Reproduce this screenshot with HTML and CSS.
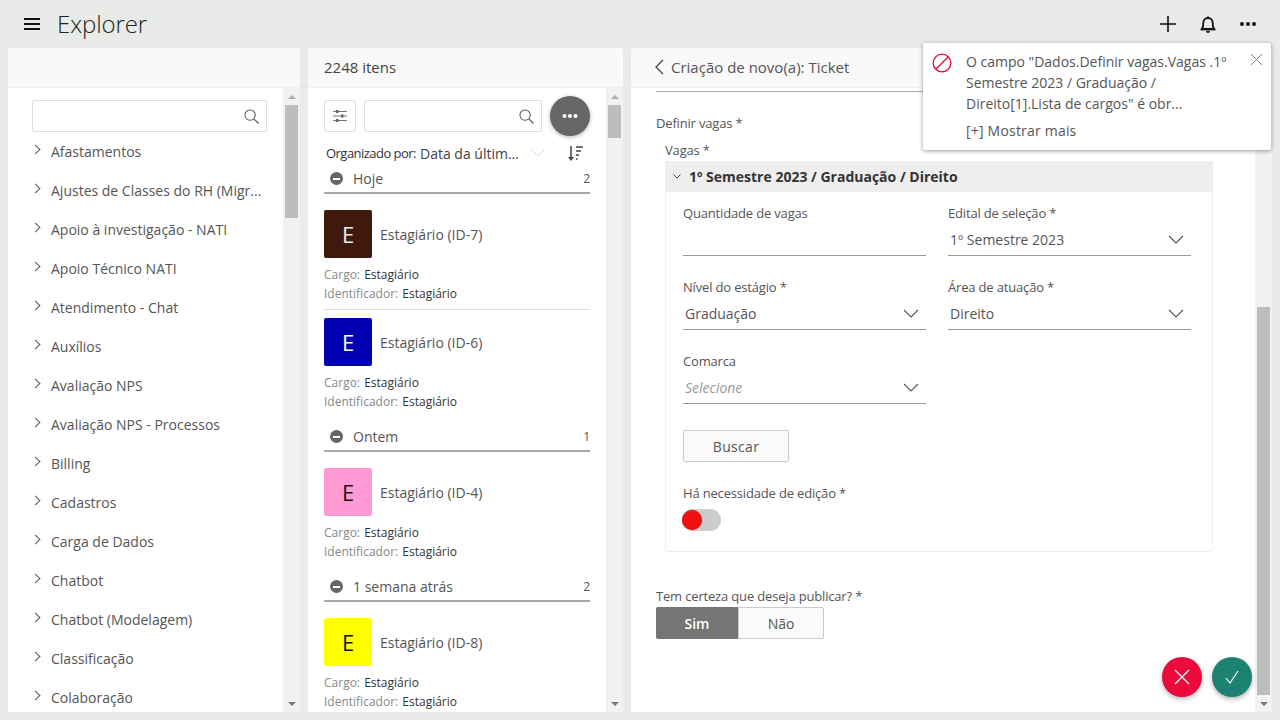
FILE: index.html
```html
<!DOCTYPE html>
<html lang="pt-BR">
<head>
<meta charset="utf-8">
<title>Explorer</title>
<link rel="stylesheet" href="styles.css">
</head>
<body>
<header class="topbar">
  <svg class="menu-icon" width="16" height="14" viewBox="0 0 16 14"><path d="M0 2h16M0 7h16M0 12h16" stroke="#111" stroke-width="2"/></svg>
  <h1 class="app-title">Explorer</h1>
  <div class="top-actions">
    <svg width="18" height="18" viewBox="0 0 18 18"><path d="M9 1v16M1 9h16" stroke="#111" stroke-width="1.6"/></svg>
    <svg width="18" height="20" viewBox="0 0 18 20"><path d="M3 15c1-1.500 1.300-3 1.300-6 0-3 2-5 4.700-5s4.700 2 4.700 5c0 3 .3 4.500 1.300 6z" fill="none" stroke="#111" stroke-width="1.800" stroke-linejoin="round"/><path d="M1.500 15.500h15" stroke="#111" stroke-width="1.800"/><path d="M7 17h4a2 2 0 0 1-4 0zM8 2.500h2V4H8z" fill="#111"/></svg>
    <svg width="18" height="6" viewBox="0 0 18 6"><circle cx="3" cy="3" r="2" fill="#111"/><circle cx="9" cy="3" r="2" fill="#111"/><circle cx="15" cy="3" r="2" fill="#111"/></svg>
  </div>
</header>

<main class="columns">
  <section class="panel tree-panel">
    <div class="panel-head"></div>
    <div class="panel-body">
      <div class="scroll-content tree-content">
        <div class="searchbox tree-search">
          <svg class="search-icon" width="15" height="15" viewBox="0 0 16 16"><circle cx="6.500" cy="6.500" r="5.500" fill="none" stroke="#555" stroke-width="1.100"/><path d="M10.500 10.500l5 5" stroke="#555" stroke-width="1.300"/></svg>
        </div>
        <ul class="tree-list">
          <li><span class="chev"></span><span class="tree-label">Afastamentos</span></li>
          <li><span class="chev"></span><span class="tree-label">Ajustes de Classes do RH (Migr...</span></li>
          <li><span class="chev"></span><span class="tree-label">Apoio à investigação - NATI</span></li>
          <li><span class="chev"></span><span class="tree-label">Apoio Técnico NATI</span></li>
          <li><span class="chev"></span><span class="tree-label">Atendimento - Chat</span></li>
          <li><span class="chev"></span><span class="tree-label">Auxílios</span></li>
          <li><span class="chev"></span><span class="tree-label">Avaliação NPS</span></li>
          <li><span class="chev"></span><span class="tree-label">Avaliação NPS - Processos</span></li>
          <li><span class="chev"></span><span class="tree-label">Billing</span></li>
          <li><span class="chev"></span><span class="tree-label">Cadastros</span></li>
          <li><span class="chev"></span><span class="tree-label">Carga de Dados</span></li>
          <li><span class="chev"></span><span class="tree-label">Chatbot</span></li>
          <li><span class="chev"></span><span class="tree-label">Chatbot (Modelagem)</span></li>
          <li><span class="chev"></span><span class="tree-label">Classificação</span></li>
          <li><span class="chev"></span><span class="tree-label">Colaboração</span></li>
        </ul>
      </div>
      <div class="scrollbar"><span class="arrow-up"></span><div class="track track-tree"><div class="thumb"></div></div><span class="arrow-down"></span></div>
    </div>
  </section>

  <section class="panel list-panel">
    <div class="panel-head head-text">2248 itens</div>
    <div class="panel-body">
      <div class="scroll-content list-content">
        <div class="list-tools">
          <div class="filter-btn">
            <svg width="14" height="14" viewBox="0 0 14 14"><path d="M0 2.500h14M0 7h14M0 11.500h14" stroke="#777" stroke-width="1"/><path d="M3 1h2.500v3H3zM8 5.500h2.500v3H8zM3 10h2.500v3H3z" fill="#666"/></svg>
          </div>
          <div class="searchbox list-search">
            <svg class="search-icon" width="15" height="15" viewBox="0 0 16 16"><circle cx="6.500" cy="6.500" r="5.500" fill="none" stroke="#555" stroke-width="1.100"/><path d="M10.500 10.500l5 5" stroke="#555" stroke-width="1.300"/></svg>
          </div>
          <div class="more-btn"><svg width="18" height="6" viewBox="0 0 18 6"><circle cx="3.500" cy="3" r="2" fill="#fff"/><circle cx="9" cy="3" r="2" fill="#fff"/><circle cx="14.500" cy="3" r="2" fill="#fff"/></svg></div>
        </div>
        <div class="sort-row">
          <span class="sort-label">Organizado por:</span><span class="sort-value">Data da últim...</span>
          <svg class="sort-chev" width="14" height="8" viewBox="0 0 14 8"><path d="M.5.500L7 7 13.500.5" fill="none" stroke="#ddd" stroke-width="1"/></svg>
          <svg class="sort-icon" width="16" height="17" viewBox="0 0 16 17"><path d="M4 1v12" stroke="#444" stroke-width="1.500"/><path d="M1 12h6l-3 4z" fill="#444"/><path d="M9 2h7M9 6h5M9 10h3M9 14h1.500" stroke="#444" stroke-width="1.600"/></svg>
        </div>

        <div class="group-head"><span class="minus"></span><span class="group-name">Hoje</span><span class="group-count">2</span></div>
        <article class="card card-line">
          <div class="card-top"><div class="avatar av-brown">E</div><span class="card-title">Estagiário (ID-7)</span></div>
          <p class="meta"><span>Cargo:</span> Estagiário</p>
          <p class="meta"><span>Identificador:</span> Estagiário</p>
        </article>
        <article class="card card-next">
          <div class="card-top"><div class="avatar av-blue">E</div><span class="card-title">Estagiário (ID-6)</span></div>
          <p class="meta"><span>Cargo:</span> Estagiário</p>
          <p class="meta"><span>Identificador:</span> Estagiário</p>
        </article>

        <div class="group-head"><span class="minus"></span><span class="group-name">Ontem</span><span class="group-count">1</span></div>
        <article class="card card-tall">
          <div class="card-top"><div class="avatar av-pink">E</div><span class="card-title">Estagiário (ID-4)</span></div>
          <p class="meta"><span>Cargo:</span> Estagiário</p>
          <p class="meta"><span>Identificador:</span> Estagiário</p>
        </article>

        <div class="group-head"><span class="minus"></span><span class="group-name">1 semana atrás</span><span class="group-count">2</span></div>
        <article class="card">
          <div class="card-top"><div class="avatar av-yellow">E</div><span class="card-title">Estagiário (ID-8)</span></div>
          <p class="meta"><span>Cargo:</span> Estagiário</p>
          <p class="meta"><span>Identificador:</span> Estagiário</p>
        </article>
      </div>
      <div class="scrollbar"><span class="arrow-up"></span><div class="track track-list"><div class="thumb"></div></div><span class="arrow-down"></span></div>
    </div>
  </section>

  <section class="panel form-panel">
    <div class="panel-head head-form">
      <svg width="10" height="16" viewBox="0 0 10 16"><path d="M9 1L2 8l7 7" fill="none" stroke="#444" stroke-width="1.300"/></svg>
      <span>Criação de novo(a): Ticket</span>
    </div>
    <div class="panel-body">
      <div class="scroll-content form-content">
        <div class="form-rule"></div>
        <div class="label outer-label">Definir vagas *</div>
        <div class="label vagas-label">Vagas *</div>
        <div class="accordion">
          <div class="acc-head">
            <svg width="8" height="5" viewBox="0 0 8 5"><path d="M.5.500L4 4 7.500.5" fill="none" stroke="#444" stroke-width="1"/></svg>
            <span>1º Semestre 2023 / Graduação / Direito</span>
          </div>
          <div class="acc-body">
            <div class="field-grid">
              <div class="field"><div class="label">Quantidade de vagas</div><div class="input"></div></div>
              <div class="field"><div class="label">Edital de seleção *</div><div class="input">1º Semestre 2023<svg class="dd" width="16" height="9" viewBox="0 0 16 9"><path d="M1 1l7 7 7-7" fill="none" stroke="#555" stroke-width="1.100"/></svg></div></div>
              <div class="field"><div class="label">Nível do estágio *</div><div class="input">Graduação<svg class="dd" width="16" height="9" viewBox="0 0 16 9"><path d="M1 1l7 7 7-7" fill="none" stroke="#555" stroke-width="1.100"/></svg></div></div>
              <div class="field"><div class="label">Área de atuação *</div><div class="input">Direito<svg class="dd" width="16" height="9" viewBox="0 0 16 9"><path d="M1 1l7 7 7-7" fill="none" stroke="#555" stroke-width="1.100"/></svg></div></div>
              <div class="field"><div class="label">Comarca</div><div class="input placeholder">Selecione<svg class="dd" width="16" height="9" viewBox="0 0 16 9"><path d="M1 1l7 7 7-7" fill="none" stroke="#555" stroke-width="1.100"/></svg></div></div>
            </div>
            <button class="search-btn" type="button">Buscar</button>
            <div class="label edit-label">Há necessidade de edição *</div>
            <div class="toggle"><span class="knob"></span></div>
          </div>
        </div>
        <div class="label publish-label">Tem certeza que deseja publicar? *</div>
        <div class="segment"><span class="seg-on">Sim</span><span class="seg-off">Não</span></div>
      </div>
      <div class="scrollbar"><span class="arrow-up"></span><div class="track track-form"><div class="thumb"></div></div><span class="arrow-down"></span></div>
    </div>
    <div class="fab fab-cancel"><svg width="16" height="16" viewBox="0 0 16 16"><path d="M1 1l14 14M15 1L1 15" stroke="#fff" stroke-width="1.200"/></svg></div>
    <div class="fab fab-ok"><svg width="14" height="14" viewBox="0 0 14 14"><path d="M1 8l4 5 8-12" fill="none" stroke="#fff" stroke-width="1.100"/></svg></div>
  </section>
</main>

<aside class="toast">
  <svg class="toast-icon" width="20" height="20" viewBox="0 0 20 20"><circle cx="10" cy="10" r="8.800" fill="none" stroke="#ea0a3b" stroke-width="1.300"/><path d="M3.800 16.200L16.200 3.800" stroke="#ea0a3b" stroke-width="1.300"/></svg>
  <div class="toast-text">
    <p>O campo "Dados.Definir vagas.Vagas .1º Semestre 2023 / Graduação / Direito[1].Lista de cargos" é obr...</p>
    <p class="toast-more">[+] Mostrar mais</p>
  </div>
  <svg class="toast-close" width="13" height="13" viewBox="0 0 13 13"><path d="M1 1l11 11M12 1L1 12" stroke="#888" stroke-width="1"/></svg>
</aside>
</body>
</html>
```
FILE: styles.css
```css
* { box-sizing: border-box; }
html, body { margin: 0; height: 100%; }
body {
  width: 1280px; height: 720px; overflow: hidden; background: #e9ebe9;
  font-family: "Open Sans", sans-serif; font-size: 14px; color: #444;
}
p, ul, h1 { margin: 0; padding: 0; }
.topbar { height: 48px; display: flex; align-items: center; padding: 0 24px; }
.menu-icon { flex: none; }
.app-title { font-size: 24px; font-weight: 300; color: #222; margin-left: 17px; line-height: 48px; letter-spacing: -.1px; }
.top-actions { margin-left: auto; display: flex; align-items: center; gap: 22px; margin-right: -1px; }
.columns { display: flex; gap: 8px; padding: 0 8px 8px 8px; height: 672px; }
.panel { background: #fff; border-radius: 3px 3px 0 0; display: flex; flex-direction: column; overflow: hidden; position: relative; }
.tree-panel { width: 292px; }
.list-panel { width: 315px; }
.form-panel { width: 641px; }
.panel-head { height: 40px; flex: none; background: #f9f9f9; border-bottom: 1px solid #eee; }
.head-text { padding-left: 16px; line-height: 39px; color: #444; font-size: 15px; }
.head-form { display: flex; align-items: center; gap: 7px; padding: 0 0 2px 23px; color: #555; font-size: 15px; }
.panel-body { flex: 1; display: flex; min-height: 0; }
.scroll-content { flex: 1; min-width: 0; overflow: hidden; }
.scrollbar { flex: none; width: 17px; background: #f1f1f1; display: flex; flex-direction: column; align-items: center; padding-left: 2px; padding-right: 2px; }
.arrow-up, .arrow-down { flex: none; width: 0; height: 0; border-left: 4px solid transparent; border-right: 4px solid transparent; margin: 6px 0; }
.arrow-up { border-bottom: 4px solid #aaa; margin-top: 7px; }
.arrow-down { border-top: 4px solid #777; }
.track { flex: 1; width: 13px; }
.thumb { width: 13px; background: #bdbdbd; }
.track-tree .thumb { height: 113px; }
.track-list .thumb { height: 33px; }
.track-form { padding-top: 202px; }
.track-form .thumb { height: 388px; }

.searchbox { height: 32px; border: 1px solid #ddd; border-radius: 2px; position: relative; background: #fff; }
.search-icon { position: absolute; right: 7px; top: 8px; }
.tree-content { padding: 12px 16px 0 24px; }
.tree-search { width: 235px; }
.tree-list { list-style: none; }
.tree-list li { height: 39px; display: flex; align-items: center; white-space: nowrap; }
.chev { width: 7px; height: 7px; border-top: 1px solid #555; border-right: 1px solid #555; transform: rotate(45deg); margin-top: -5px; flex: none; }
.tree-label { margin-left: 12px; color: #555; }

.list-content { padding: 8px 16px 0 16px; }
.list-tools { display: flex; align-items: center; gap: 8px; height: 40px; }
.filter-btn { width: 32px; height: 32px; border: 1px solid #ddd; border-radius: 2px; display: flex; align-items: center; justify-content: center; flex: none; }
.list-search { width: 178px; flex: none; }
.more-btn { width: 40px; height: 40px; border-radius: 50%; background: #666; display: flex; align-items: center; justify-content: center; flex: none; box-shadow: 0 1px 4px rgba(0,0,0,.3); }
.sort-row { display: flex; align-items: center; height: 32px; padding: 2px 0 0 2px; white-space: nowrap; }
.sort-label { font-size: 13px; color: #333; letter-spacing: -.53px; }
.sort-value { margin-left: 4px; color: #444; }
.sort-chev { margin-left: 12px; }
.sort-icon { margin-left: 22px; }
.group-head { height: 26px; padding-bottom: 3px; border-bottom: 2px solid #aaa; display: flex; align-items: center; color: #555; }
.minus { width: 13px; height: 13px; border-radius: 50%; background: #666; position: relative; margin-left: 6px; flex: none; }
.minus::after { content: ""; position: absolute; left: 3px; right: 3px; top: 5.500px; height: 2px; background: #fff; }
.group-name { margin-left: 10px; }
.group-count { margin-left: auto; font-size: 12px; }
.card { height: 116px; padding-top: 16px; }
.card-line { border-bottom: 1px solid #ddd; }
.card-next { padding-top: 8px; }
.card-tall { height: 124px; }
.card-top { display: flex; align-items: center; gap: 8px; margin-bottom: 7px; }
.avatar { width: 48px; height: 48px; border-radius: 2px; display: flex; align-items: center; justify-content: center; font-size: 22px; flex: none; }
.av-brown { background: #3f1a0c; color: #eee; }
.av-blue { background: #0000b0; color: #fff; }
.av-pink { background: #ff9ad5; color: #111; }
.av-yellow { background: #ffff00; color: #111; }
.card-title { color: #555; font-size: 14px; }
.meta { font-size: 12px; line-height: 19px; color: #333; white-space: nowrap; }
.meta span { color: #888; margin-right: 1px; }

.form-content { padding: 3px 0 0 25px; }
.form-rule { border-top: 1px solid #aaa; width: 573px; }
.label { font-size: 13px; color: #555; line-height: 18px; letter-spacing: -.17px; }
.outer-label { margin-top: 22px; }
.vagas-label { margin: 9px 0 2px 9px; }
.accordion { margin-left: 9px; width: 548px; border: 1px solid #eee; border-top: 0; border-radius: 0 0 4px 4px; height: 391px; }
.acc-head { height: 31px; background: #eee; margin: 0 -1px; display: flex; align-items: center; gap: 8px; padding-left: 8px; font-weight: 700; color: #333; }
.acc-body { padding: 12px 0 0 17px; }
.field-grid { display: grid; grid-template-columns: 243px 243px; column-gap: 22px; row-gap: 22px; }
.field { height: 52px; }
.input { height: 34px; border-bottom: 1px solid #999; display: flex; align-items: center; padding: 2px 2px 0 2px; justify-content: space-between; color: #555; }
.dd { margin-right: 5px; margin-top: 0; }
.placeholder { font-style: italic; color: #999; }
.search-btn { display: block; margin-top: 26px; width: 106px; height: 32px; background: #fafafa; border: 1px solid #ccc; border-radius: 2px; font: inherit; color: #555; padding: 0; letter-spacing: .3px; }
.edit-label { margin-top: 22px; }
.toggle { width: 39px; height: 22px; margin: 7px 0 0 -1px; border-radius: 11px; background: #ccc; padding-top: 1px; }
.knob { display: block; width: 20px; height: 20px; border-radius: 50%; background: #f21010; box-shadow: 0 0 1px #666; }
.publish-label { margin-top: 35px; }
.segment { display: flex; width: 168px; height: 32px; margin-top: 2px; }
.seg-on { width: 82px; background: #757575; color: #fff; font-weight: 600; display: flex; align-items: center; justify-content: center; border-radius: 2px 0 0 2px; }
.seg-off { width: 86px; background: #fafafa; color: #555; border: 1px solid #ccc; border-radius: 0 2px 2px 0; display: flex; align-items: center; justify-content: center; }
.fab { position: absolute; top: 609px; width: 40px; height: 40px; border-radius: 50%; display: flex; align-items: center; justify-content: center; box-shadow: 0 2px 5px rgba(0,0,0,.3); }
.fab-cancel { left: 531px; background: #ea0a3b; }
.fab-ok { left: 581px; background: #1d8272; }

.toast { position: absolute; left: 923px; top: 43px; width: 348px; height: 107px; background: #fff; border-radius: 2px; box-shadow: 0 1px 4px rgba(0,0,0,.4); display: flex; padding: 8px 0 0 9px; }
.toast-icon { flex: none; margin-top: 2px; }
.toast-text { margin-left: 14px; width: 270px; font-size: 14px; line-height: 21px; color: #555; }
.toast-more { margin-top: 6px; letter-spacing: .2px; }
.toast-close { position: absolute; right: 8px; top: 10px; }
```
